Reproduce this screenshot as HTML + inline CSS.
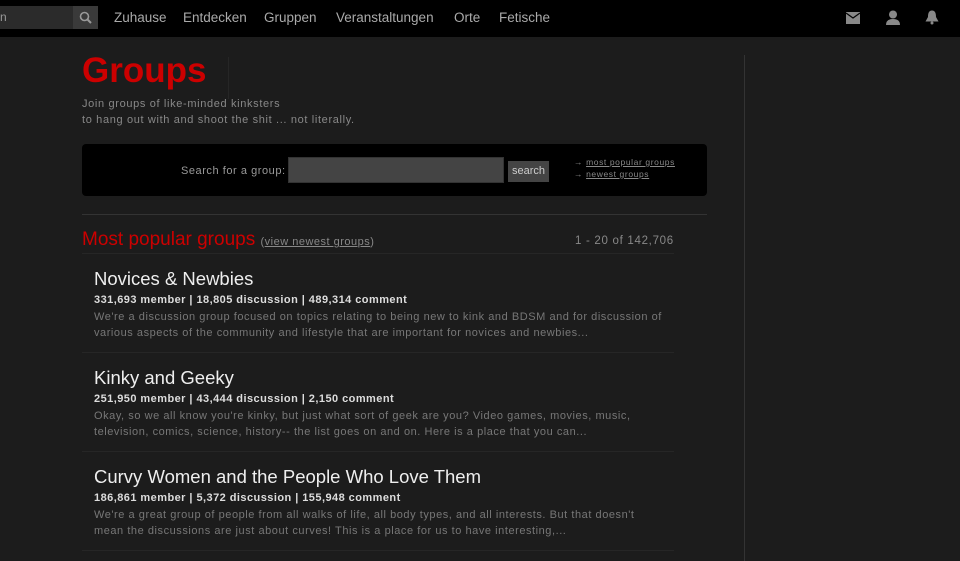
<!DOCTYPE html>
<html><head><meta charset="utf-8"><style>
*{margin:0;padding:0;box-sizing:border-box}
body{width:960px;height:561px;overflow:hidden;background:#1c1c1c;font-family:"Liberation Sans",sans-serif;position:relative;color:#ccc}
.nav{position:absolute;left:0;top:0;width:960px;height:37px;background:#000}
.sb{position:absolute;left:0;top:6px;width:73px;height:23px;background:#2b2b2b;color:#999;font-size:12px;line-height:23px}
.sbtn{position:absolute;left:73px;top:6px;width:25px;height:23px;background:#3a3a3a}
.nav a{position:absolute;top:10px;color:#aaa;font-size:13.5px;text-decoration:none}
.ab{position:absolute}
h1{position:absolute;left:82px;top:51px;color:#cc0000;font-size:35px;font-weight:bold}
.sub{position:absolute;left:82px;top:96px;color:#888;font-size:11px;line-height:16px;letter-spacing:0.65px}
.box{position:absolute;left:82px;top:144px;width:625px;height:52px;background:#000;border-radius:4px}
.grp{position:absolute;left:94px;width:600px}
.grp h2{font-weight:normal;color:#eee;font-size:18.5px;line-height:22px}
.grp .st{color:#ddd;font-size:11px;font-weight:bold;margin-top:3px;line-height:14px;letter-spacing:0.45px}
.grp .d{color:#777;font-size:11px;line-height:16px;margin-top:2px;letter-spacing:0.55px}
.hr{position:absolute;left:82px;width:592px;height:1px;background:#262626}
</style></head><body>
<div class="nav">
<div class="sb">n</div>
<div class="sbtn"><svg width="25" height="23"><circle cx="11.5" cy="10.5" r="4" fill="none" stroke="#999" stroke-width="1.6"/><line x1="14.5" y1="13.5" x2="18" y2="17" stroke="#999" stroke-width="2"/></svg></div>
<a style="left:114px">Zuhause</a><a style="left:183px">Entdecken</a><a style="left:264px">Gruppen</a><a style="left:336px">Veranstaltungen</a><a style="left:454px">Orte</a><a style="left:499px">Fetische</a>
<svg class="ab" style="left:846px;top:12px" width="14" height="12"><path d="M0 0H14V12H0Z" fill="#888"/><path d="M0 1L7 6L14 1" fill="none" stroke="#000" stroke-width="1.2"/></svg>
<svg class="ab" style="left:885px;top:10px" width="16" height="15"><circle cx="8" cy="4.5" r="4" fill="#888"/><path d="M1 15Q1 9 8 9Q15 9 15 15Z" fill="#888"/></svg>
<svg class="ab" style="left:924px;top:10px" width="16" height="15"><path d="M8 0.5C4.5 0.5 4 4 4 7L1.5 11.5H14.5L12 7C12 4 11.5 0.5 8 0.5Z" fill="#888"/><circle cx="8" cy="13" r="1.5" fill="#888"/></svg>
</div>
<div class="ab" style="left:744px;top:55px;width:1px;height:506px;background:#333"></div>
<div class="ab" style="left:228px;top:57px;width:1px;height:42px;background:#262626"></div>
<h1>Groups</h1>
<div class="sub">Join groups of like-minded kinksters<br>to hang out with and shoot the shit ... not literally.</div>
<div class="box">
<div class="ab" style="left:99px;top:21px;color:#999;font-size:11px;letter-spacing:0.55px">Search for a group:</div>
<div class="ab" style="left:206px;top:13px;width:216px;height:26px;background:#444;border:1px solid #333"></div>
<div class="ab" style="left:426px;top:17px;width:41px;height:21px;background:#444;color:#ccc;font-size:11px;line-height:21px;text-align:center">search</div>
<div class="ab" style="left:492px;top:12px;color:#888;font-size:8.5px;line-height:12px;letter-spacing:0.6px">→ <u>most popular groups</u><br>→ <u>newest groups</u></div>
</div>
<div class="ab" style="left:82px;top:214px;width:625px;height:1px;background:#333"></div>
<div class="ab" style="left:82px;top:229px;color:#cc0000;font-size:19px">Most popular groups <span style="color:#888;font-size:11px;letter-spacing:0.5px">(<u>view newest groups</u>)</span></div>
<div class="ab" style="left:575px;top:235px;color:#888;font-size:11.5px;letter-spacing:0.7px">1 - 20 of 142,706</div>
<div class="hr" style="top:253px"></div>
<div class="grp" style="top:268px"><h2>Novices &amp; Newbies</h2><div class="st">331,693 member | 18,805 discussion | 489,314 comment</div><div class="d">We're a discussion group focused on topics relating to being new to kink and BDSM and for discussion of<br>various aspects of the community and lifestyle that are important for novices and newbies...</div></div>
<div class="hr" style="top:352px"></div>
<div class="grp" style="top:367px"><h2>Kinky and Geeky</h2><div class="st">251,950 member | 43,444 discussion | 2,150 comment</div><div class="d">Okay, so we all know you're kinky, but just what sort of geek are you? Video games, movies, music,<br>television, comics, science, history-- the list goes on and on. Here is a place that you can...</div></div>
<div class="hr" style="top:451px"></div>
<div class="grp" style="top:466px"><h2>Curvy Women and the People Who Love Them</h2><div class="st">186,861 member | 5,372 discussion | 155,948 comment</div><div class="d">We're a great group of people from all walks of life, all body types, and all interests. But that doesn't<br>mean the discussions are just about curves! This is a place for us to have interesting,...</div></div>
<div class="hr" style="top:550px"></div>
</body></html>
